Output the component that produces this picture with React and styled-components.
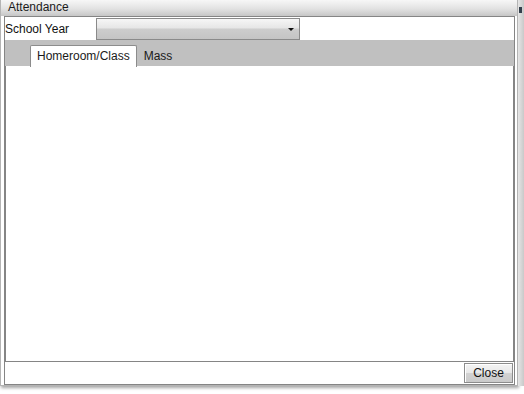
import React from "react";
import styled, { createGlobalStyle } from "styled-components";

const GlobalStyle = createGlobalStyle`
  html, body {
    margin: 0;
    padding: 0;
    background: #fff;
  }
  body {
    font-family: "Liberation Sans", Arial, sans-serif;
    font-size: 12px;
    color: #111;
  }
`;

const Screen = styled.div`
  display: flex;
  width: 524px;
  height: 394px;
  overflow: hidden;
  background: #fff;
`;

const Window = styled.div`
  display: flex;
  flex-direction: column;
  box-sizing: border-box;
  width: 518px;
  height: 386px;
  border: 1px solid #b4b4b4;
  border-top: none;
  background: #fff;
  box-shadow: 1px 2px 3px rgba(0, 0, 0, 0.35);
`;

const TitleBar = styled.div`
  height: 16px;
  flex: none;
  padding-left: 7px;
  line-height: 15px;
  color: #1a1a1a;
  background: linear-gradient(#f7f7f7, #e2e2e2 55%, #c6c6c6);
`;

const Panel = styled.div`
  flex: 1;
  display: flex;
  flex-direction: column;
  margin: 0 2px 0 3px;
  border: 1px solid #858585;
  background: #fff;
`;

const FieldRow = styled.div`
  display: grid;
  grid-template-columns: 91px 204px;
  align-items: center;
  height: 23px;
`;

const Label = styled.span`
  color: #111;
`;

const Combo = styled.div`
  position: relative;
  box-sizing: border-box;
  height: 22px;
  margin-top: 1px;
  border: 1px solid #8a8a8a;
  background: linear-gradient(#f6f6f6, #e6e6e6 45%, #cdcdcd 50%, #c4c4c4);
`;

const ComboArrow = styled.span`
  position: absolute;
  right: 5px;
  top: 9px;
  width: 0;
  height: 0;
  border-left: 3px solid transparent;
  border-right: 3px solid transparent;
  border-top: 3px solid #111;
`;

const TabControl = styled.div`
  display: flex;
  flex-direction: column;
  height: 322px;
  flex: none;
`;

const TabStrip = styled.div`
  display: flex;
  align-items: flex-end;
  height: 26px;
  padding-left: 25px;
  background: #c0c0c0;
`;

const Tab = styled.div`
  box-sizing: border-box;
  height: ${(p) => (p.$active ? "22px" : "21px")};
  padding: 0 6px;
  line-height: 21px;
  color: #1a1a1a;
  background: ${(p) => (p.$active ? "#fff" : "transparent")};
  border: 1px solid ${(p) => (p.$active ? "#8c8c8c" : "transparent")};
  border-bottom: none;
  border-radius: 2px 2px 0 0;
  margin-bottom: ${(p) => (p.$active ? "-1px" : "0")};
  position: relative;
`;

const TabBody = styled.div`
  flex: 1;
  border: 1px solid #858585;
  border-top: none;
  background: #fff;
`;

const Footer = styled.div`
  display: flex;
  justify-content: flex-end;
  align-items: flex-start;
  flex: 1;
  padding: 1px 1px 0 0;
`;

const Button = styled.button`
  box-sizing: border-box;
  width: 49px;
  height: 20px;
  padding: 0;
  font-family: "Liberation Sans", Arial, sans-serif;
  font-size: 12px;
  color: #111;
  border: 1px solid #8c8c8c;
  border-radius: 0;
  background: linear-gradient(#f4f4f4, #e8e8e8 50%, #d2d2d2 52%, #cacaca);
  box-shadow: inset 1px 1px 0 #fff;
`;

const SideStrip = styled.div`
  position: relative;
  width: 6px;
  height: 386px;
  background: linear-gradient(90deg, #e6e6e6, #c9c9c9);
`;

const SideMark = styled.span`
  position: absolute;
  left: 1px;
  top: 7px;
  width: 3px;
  height: 6px;
  background: #34404c;
`;

const App = () => {
  return (
    <>
      <GlobalStyle />
      <Screen>
        <Window>
          <TitleBar>Attendance</TitleBar>
          <Panel>
            <FieldRow>
              <Label>School Year</Label>
              <Combo>
                <ComboArrow />
              </Combo>
            </FieldRow>
            <TabControl>
              <TabStrip>
                <Tab $active>Homeroom/Class</Tab>
                <Tab>Mass</Tab>
              </TabStrip>
              <TabBody />
            </TabControl>
            <Footer>
              <Button>Close</Button>
            </Footer>
          </Panel>
        </Window>
        <SideStrip>
          <SideMark />
        </SideStrip>
      </Screen>
    </>
  );
};

export default App;
